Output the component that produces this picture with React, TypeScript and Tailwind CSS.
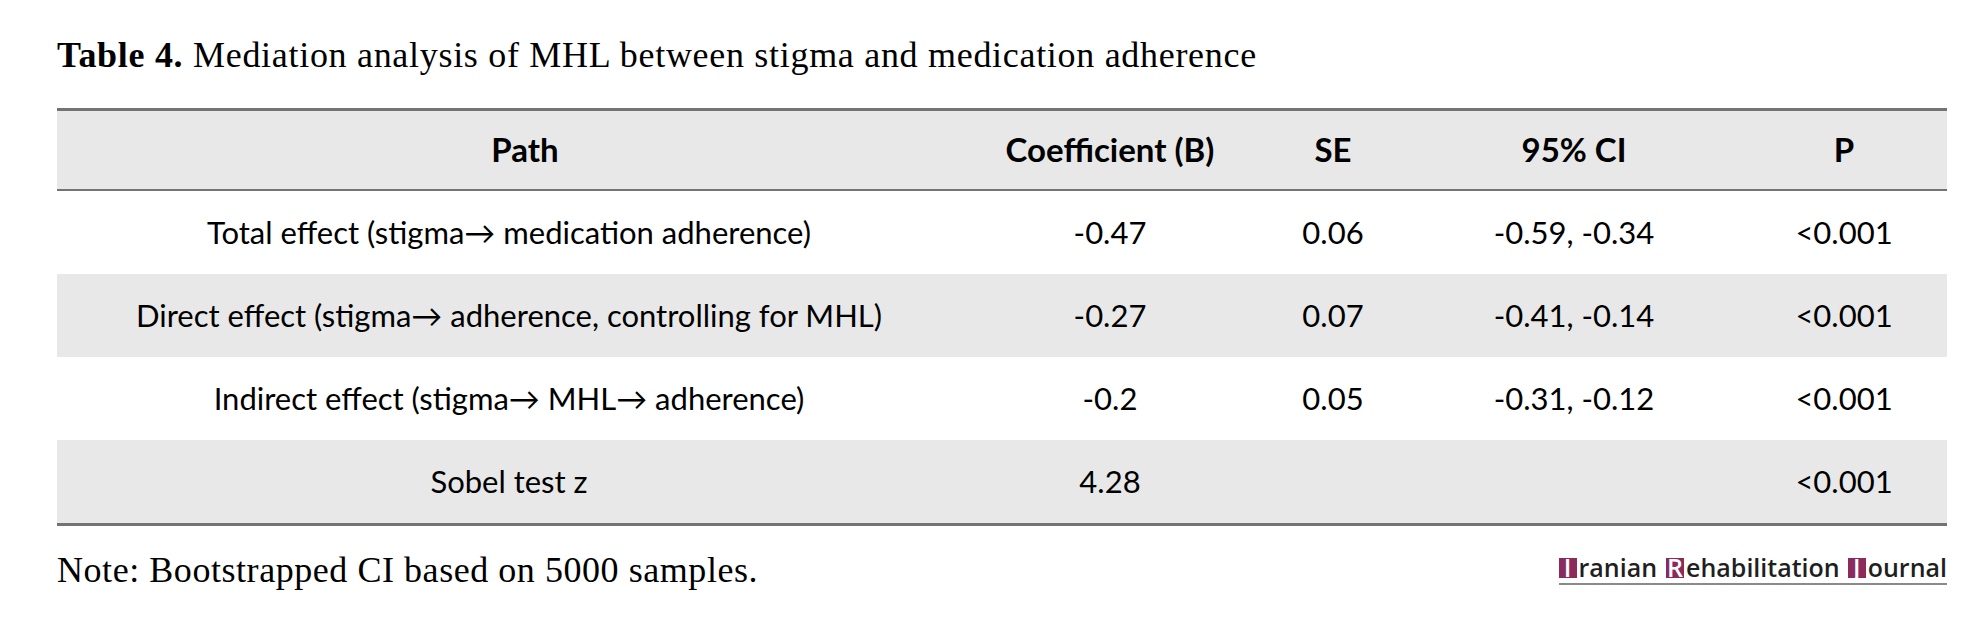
const cols = [
  'w-[904px]',
  'w-[298px]',
  'w-[148px]',
  'w-[334px]',
  'w-[206px]',
];

const header = ['Path', 'Coefficient (B)', 'SE', '95% CI', 'P'];

const rows = [
  ['Total effect (stigma\u2192 medication adherence)', '-0.47', '0.06', '-0.59, -0.34', '<0.001'],
  ['Direct effect (stigma\u2192 adherence, controlling for MHL)', '-0.27', '0.07', '-0.41, -0.14', '<0.001'],
  ['Indirect effect (stigma\u2192 MHL\u2192 adherence)', '-0.2', '0.05', '-0.31, -0.12', '<0.001'],
  ['Sobel test z', '4.28', '', '', '<0.001'],
];

function Logo() {
  const box = 'inline-flex items-center justify-center w-[18px] h-[20px] bg-[#8c2a5c] text-white mr-[2px]';
  return (
    <div className="flex flex-col items-stretch">
      <div className="flex items-center text-[25px] leading-none font-semibold text-[#1f1f1f] font-['Open_Sans',sans-serif]">
        <span className={box}>I</span>
        <span>ranian</span>
        <span className={box + ' ml-[9px]'}>R</span>
        <span>ehabilitation</span>
        <span className={box + ' ml-[8px]'}>J</span>
        <span>ournal</span>
      </div>
      <div className="mt-[3px] h-[2px] bg-[#8a8a8a]" />
    </div>
  );
}

export default function App() {
  return (
    <div className="w-[1974px] h-[619px] bg-white overflow-hidden">
      <div className="h-[74px] pl-[57px] pt-[37px] text-[36px] leading-[36px] tracking-[0.7px] text-black font-['Liberation_Serif',serif]">
        <span className="font-bold">Table 4.</span> Mediation analysis of MHL between stigma and medication adherence
      </div>

      <div className="ml-[57px] mt-[34px] w-[1890px] border-t-[3px] border-b-[3px] border-[#737373] font-['Lato',sans-serif] text-[31px] text-black">
        <div className="flex h-[80px] items-center bg-[#e8e8e8] border-b-[2px] border-[#737373] font-bold text-[33px]">
          {header.map((h, i) => (
            <div key={h} className={cols[i] + ' text-center' + (i === 0 ? ' pl-[32px]' : '')}>{h}</div>
          ))}
        </div>
        {rows.map((r, ri) => (
          <div
            key={ri}
            className={'flex h-[83px] items-center ' + (ri % 2 === 1 ? 'bg-[#e8e8e8]' : 'bg-white')}
          >
            {r.map((c, i) => (
              <div key={i} className={cols[i] + ' text-center'}>{c}</div>
            ))}
          </div>
        ))}
      </div>

      <div className="flex items-start justify-between pl-[57px] pr-[27px] pt-[26px]">
        <div className="text-[36px] leading-[36px] tracking-[0.55px] text-black font-['Liberation_Serif',serif]">
          Note: Bootstrapped CI based on 5000 samples.
        </div>
        <div className="pt-[3px]">
          <Logo />
        </div>
      </div>
    </div>
  );
}
